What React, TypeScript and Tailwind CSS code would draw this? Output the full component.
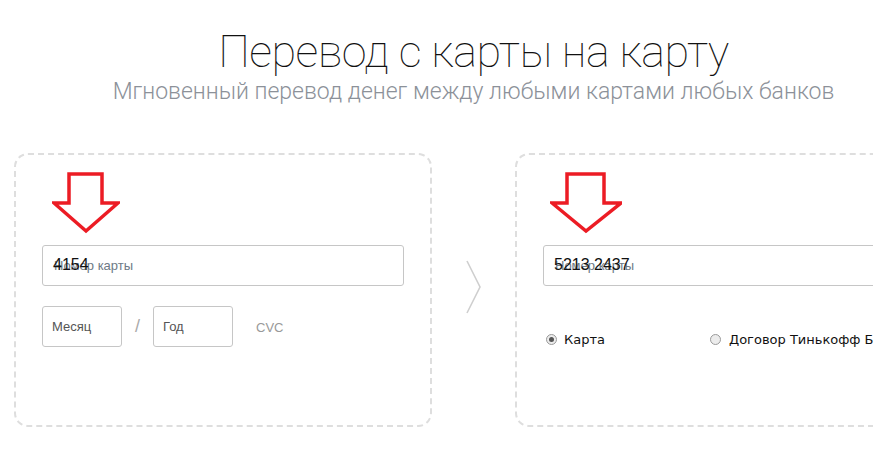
import React from 'react';

function RedArrow({ wide = false }: { wide?: boolean }) {
  // outline arrow pointing down, drawn like a quick annotation
  const pts = wide
    ? '15,2 52,2 52,31 69,31 34,59 0,31 15,31'
    : '15,2 48,2 48,31 64,31 32,59 0,31 15,31';
  return (
    <svg width={wide ? 72 : 68} height={64} viewBox={wide ? '-2 0 72 64' : '-2 0 68 64'} className="block">
      <polygon points={pts} fill="none" stroke="#ec1c24" strokeWidth={3.5} strokeLinejoin="miter" />
    </svg>
  );
}

function CardInput({ value }: { value: string }) {
  return (
    <div className="relative h-[41px] rounded-[3px] border border-[#c6c6c6] bg-white">
      <span className="absolute left-[11px] top-[12px] text-[13px] leading-[16px] text-[#6e7a86]">Номер карты</span>
      <span className="absolute left-[10px] top-[10px] text-[16px] leading-[18px] text-[#111]">{value}</span>
    </div>
  );
}

function Radio({ checked = false }: { checked?: boolean }) {
  return (
    <span className="inline-flex shrink-0 w-[11px] h-[11px] rounded-full border border-[#9a9a9a] bg-[#ececec] items-center justify-center">
      {checked && <span className="w-[5px] h-[5px] rounded-full bg-[#555]" />}
    </span>
  );
}

export default function App() {
  return (
    <div className="w-[873px] h-[458px] overflow-hidden bg-white" style={{ fontFamily: '"Liberation Sans", Arial, sans-serif' }}>
      <div className="w-[919px] ml-[14px]">
        <div className="text-center pt-[26px]" style={{ fontFamily: 'Roboto, "Noto Sans", sans-serif' }}>
          <h1 className="text-[45px] leading-[52px] font-thin text-[#111] tracking-[-0.5px]">Перевод с карты на карту</h1>
          <p className="text-[23px] leading-[26px] font-light text-[#8c9199] mt-[1px]">Мгновенный перевод денег между любыми картами любых банков</p>
        </div>

        <div className="flex items-start mt-[48px]">
          {/* From card */}
          <div className="relative w-[418px] h-[274px] shrink-0 rounded-[14px] border-2 border-dashed border-[#dedede] px-[26px] pt-[90px]">
            <div className="absolute left-[36px] top-[17px]">
              <RedArrow />
            </div>
            <CardInput value="4154" />
            <div className="flex items-center mt-[20px]">
              <div className="w-[80px] h-[41px] rounded-[3px] border border-[#c6c6c6] flex items-center pl-[9px] text-[13px] text-[#555]">Месяц</div>
              <span className="w-[31px] text-center text-[18px] font-light text-[#aaa]">/</span>
              <div className="w-[80px] h-[41px] rounded-[3px] border border-[#c6c6c6] flex items-center pl-[9px] text-[13px] text-[#555]">Год</div>
              <span className="ml-[23px] mt-[2px] text-[13px] text-[#999]">CVC</span>
            </div>
          </div>

          {/* chevron */}
          <div className="w-[83px] shrink-0 flex justify-center pt-[107px]">
            <svg width="18" height="54" viewBox="0 0 18 54" className="ml-[1px]">
              <polyline points="2,1 15,27 2,53" fill="none" stroke="#cfcfcf" strokeWidth="1.6" />
            </svg>
          </div>

          {/* To card */}
          <div className="relative w-[418px] h-[274px] shrink-0 rounded-[14px] border-2 border-dashed border-[#dedede] px-[26px] pt-[90px]">
            <div className="absolute left-[33px] top-[17px]">
              <RedArrow wide />
            </div>
            <CardInput value="5213 2437" />
            <div className="flex items-center mt-[44px] pl-[3px] text-[#111]" style={{ fontFamily: '"DejaVu Sans", Verdana, sans-serif', fontSize: '13px' }}>
              <Radio checked />
              <span className="ml-[7px]">Карта</span>
              <span className="ml-[105px] flex items-center">
                <Radio />
              </span>
              <span className="ml-[8px] whitespace-nowrap">Договор Тинькофф Банка</span>
            </div>
          </div>
        </div>
      </div>
    </div>
  );
}
